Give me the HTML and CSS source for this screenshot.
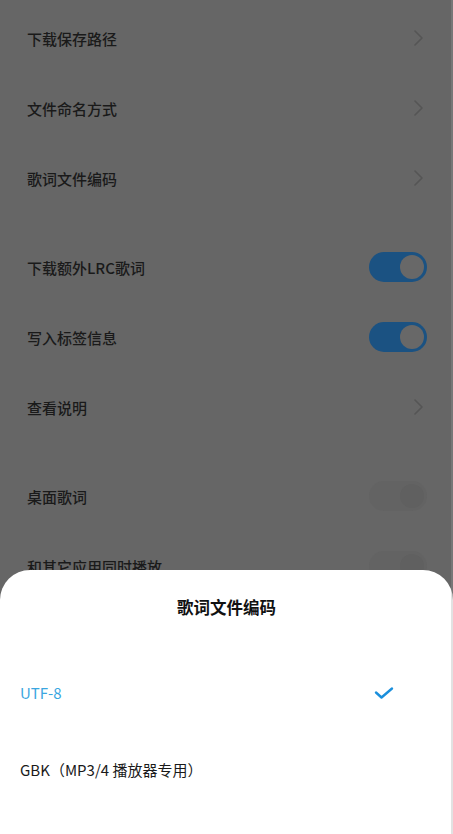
FILE: index.html
```html
<!DOCTYPE html>
<html lang="zh-CN">
<head>
<meta charset="utf-8">
<title>歌词文件编码</title>
<link rel="stylesheet" href="styles.css">
</head>
<body>
<div class="screen">
  <div class="settings">
    <div class="group">
      <div class="row"><span class="label">下载保存路径</span>
        <svg class="chev" viewBox="0 0 12 18"><path d="M2 2 L9 9 L2 16"/></svg></div>
      <div class="row"><span class="label">文件命名方式</span>
        <svg class="chev" viewBox="0 0 12 18"><path d="M2 2 L9 9 L2 16"/></svg></div>
      <div class="row"><span class="label">歌词文件编码</span>
        <svg class="chev" viewBox="0 0 12 18"><path d="M2 2 L9 9 L2 16"/></svg></div>
    </div>
    <div class="group">
      <div class="row"><span class="label">下载额外LRC歌词</span>
        <span class="switch on"><span class="knob"></span></span></div>
      <div class="row"><span class="label">写入标签信息</span>
        <span class="switch on"><span class="knob"></span></span></div>
      <div class="row"><span class="label">查看说明</span>
        <svg class="chev" viewBox="0 0 12 18"><path d="M2 2 L9 9 L2 16"/></svg></div>
    </div>
    <div class="group">
      <div class="row"><span class="label">桌面歌词</span>
        <span class="switch off"><span class="knob"></span></span></div>
      <div class="row"><span class="label">和其它应用同时播放</span>
        <span class="switch off"><span class="knob"></span></span></div>
    </div>
  </div>

  <div class="sheet">
    <div class="sheet-title">歌词文件编码</div>
    <div class="options">
      <div class="option selected"><span>UTF-8</span>
        <svg class="check" viewBox="0 0 22 14"><path d="M3 6.5 L8.5 11.5 L19 2.5"/></svg></div>
      <div class="option"><span>GBK（MP3/4 播放器专用）</span></div>
    </div>
  </div>
  <div class="edge"></div>
</div>
</body>
</html>
```

FILE: styles.css
```css
html, body {
  margin: 0;
  padding: 0;
}
body {
  width: 453px;
  height: 834px;
  overflow: hidden;
  background: #666666;
  font-family: "Noto Sans CJK SC", "Noto Sans", sans-serif;
}
.screen {
  position: relative;
  width: 453px;
  height: 834px;
  overflow: hidden;
}
.settings {
  padding-top: 3px;
  display: flex;
  flex-direction: column;
  gap: 19px;
}
.group {
  display: flex;
  flex-direction: column;
}
.row {
  height: 70px;
  display: flex;
  align-items: center;
  justify-content: space-between;
  padding: 0 26px 0 27px;
}
.label {
  font-size: 15px;
  font-weight: 500;
  color: #1a1a1a;
}
.chev {
  width: 12px;
  height: 18px;
  margin-right: 2px;
}
.chev path {
  fill: none;
  stroke: #555555;
  stroke-width: 1.6;
  stroke-linecap: round;
  stroke-linejoin: round;
}
.switch {
  width: 58px;
  height: 30px;
  border-radius: 15px;
  box-sizing: border-box;
  padding: 3px;
  display: flex;
  justify-content: flex-end;
}
.switch.on {
  background: #1b5282;
}
.switch.off {
  background: #636363;
}
.knob {
  width: 24px;
  height: 24px;
  border-radius: 50%;
  background: #686868;
}
.switch.off .knob {
  background: #606060;
}
.sheet {
  position: absolute;
  left: 0;
  right: 0;
  bottom: 0;
  height: 264px;
  background: #ffffff;
  border-radius: 30px 30px 0 0;
}
.sheet-title {
  height: 74px;
  display: flex;
  align-items: center;
  justify-content: center;
  font-size: 16.5px;
  font-weight: 700;
  color: #111111;
}
.options {
  margin-top: 10px;
  display: flex;
  flex-direction: column;
}
.option {
  height: 77px;
  display: flex;
  align-items: center;
  justify-content: space-between;
  padding: 0 58px 0 20px;
  font-size: 15px;
  font-weight: 400;
  color: #1a1a1a;
}
.option.selected {
  color: #3aa6e0;
}
.check {
  width: 22px;
  height: 14px;
}
.check path {
  fill: none;
  stroke: #1a8fdc;
  stroke-width: 2.4;
  stroke-linecap: round;
  stroke-linejoin: round;
}
.edge {
  position: absolute;
  top: 0;
  right: 0;
  width: 2px;
  height: 834px;
  background: rgba(160, 160, 160, 0.3);
}
```
